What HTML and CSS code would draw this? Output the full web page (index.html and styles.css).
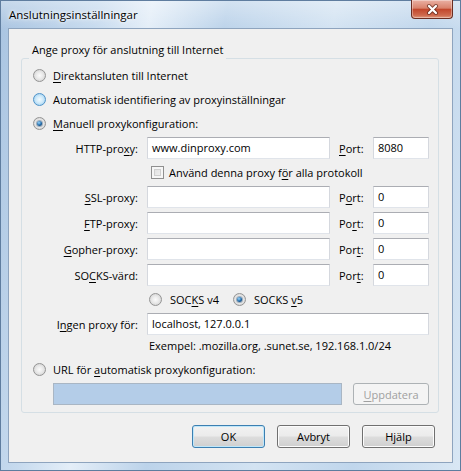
FILE: index.html
```html
<!DOCTYPE html>
<html lang="sv">
<head>
    <meta charset="UTF-8">
    <title>Anslutningsinställningar</title>
    <link rel="stylesheet" href="styles.css">
</head>
<body>
<div class="window">
    <div class="titlebar">
        <span class="title">Anslutningsinställningar</span>
        <div class="close-btn">
            <svg width="13" height="11" viewBox="0 0 13 11">
                <path d="M3 2 L10 9 M10 2 L3 9" stroke="#4a1a10" stroke-width="4" stroke-linecap="round" opacity="0.6"/>
                <path d="M3 2 L10 9 M10 2 L3 9" stroke="#fff" stroke-width="2.2" stroke-linecap="round"/>
            </svg>
        </div>
    </div>

    <div class="client">
        <div class="group">
            <span class="legend">Ange proxy för anslutning till Internet</span>

            <div class="option"><span class="radio"></span><span><u>D</u>irektansluten till Internet</span></div>
            <div class="option"><span class="radio hot"></span><span>Automatisk identifiering av proxyinställningar</span></div>
            <div class="option"><span class="radio checked"></span><span><u>M</u>anuell proxykonfiguration:</span></div>

            <div class="proxy-grid">
                <span class="field-label">HTTP-pro<u>x</u>y:</span>
                <div class="textbox">www.dinproxy.com</div>
                <span class="port-label"><u>P</u>ort:</span>
                <div class="textbox">8080</div>

                <div class="check-row"><span class="checkbox"></span><span>Använd denna proxy f<u>ö</u>r alla protokoll</span></div>

                <span class="field-label"><u>S</u>SL-proxy:</span>
                <div class="textbox"></div>
                <span class="port-label">P<u>o</u>rt:</span>
                <div class="textbox">0</div>

                <span class="field-label"><u>F</u>TP-proxy:</span>
                <div class="textbox"></div>
                <span class="port-label">Po<u>r</u>t:</span>
                <div class="textbox">0</div>

                <span class="field-label"><u>G</u>opher-proxy:</span>
                <div class="textbox"></div>
                <span class="port-label">Por<u>t</u>:</span>
                <div class="textbox">0</div>

                <span class="field-label">SO<u>C</u>KS-värd:</span>
                <div class="textbox"></div>
                <span class="port-label">Por<u>t</u>:</span>
                <div class="textbox">0</div>

                <div class="socks-row">
                    <div class="socks-opt"><span class="radio"></span><span>SOC<u>K</u>S v4</span></div>
                    <div class="socks-opt"><span class="radio checked"></span><span>SOCKS <u>v</u>5</span></div>
                </div>

                <span class="field-label">I<u>n</u>gen proxy för:</span>
                <div class="textbox wide">localhost, 127.0.0.1</div>

                <div class="hint">Exempel: .mozilla.org, .sunet.se, 192.168.1.0/24</div>
            </div>

            <div class="option url-option"><span class="radio"></span><span>URL för <u>a</u>utomatisk proxykonfiguration:</span></div>
            <div class="url-row">
                <div class="textbox url-box"></div>
                <div class="button disabled"><u>U</u>ppdatera</div>
            </div>
        </div>

        <div class="buttons">
            <div class="button default">OK</div>
            <div class="button">Avbryt</div>
            <div class="button">Hjälp</div>
        </div>
    </div>
</div>
</body>
</html>
```

FILE: styles.css
```css
* {
    box-sizing: border-box;
}

body {
    margin: 0;
    font-family: "Open Sans", "Liberation Sans", sans-serif;
    font-size: 11px;
    color: #000;
}

u {
    text-decoration-thickness: 1px;
    text-underline-offset: 2px;
}

/* Glass frame */
.window {
    position: relative;
    width: 461px;
    height: 471px;
    border: 1px solid #5f7d9f;
    background:
        linear-gradient(180deg, rgba(255,255,255,0.35) 0, rgba(255,255,255,0) 28px),
        linear-gradient(100deg, #a9c4e1 0%, #c6daee 18%, #e4eef8 28%, #bcd3ea 42%, #d3e3f2 62%, #c0d6ec 80%, #d9e7f4 100%);
    display: flex;
    flex-direction: column;
}

.titlebar {
    height: 27px;
    display: flex;
    align-items: center;
    padding-left: 8px;
}

.title {
    font-size: 11.5px;
    text-shadow: 0 0 6px #fff, 0 0 3px #fff;
}

.close-btn {
    position: absolute;
    top: -1px;
    right: 7px;
    width: 42px;
    height: 19px;
    border: 1px solid #6b2d22;
    border-top: none;
    border-radius: 0 0 4px 4px;
    background: linear-gradient(180deg, #eab1a4 0%, #d9826c 45%, #c2472c 52%, #cf6a4e 85%, #e09a7f 100%);
    box-shadow: inset 0 0 0 1px rgba(255,255,255,0.35);
    display: flex;
    align-items: center;
    justify-content: center;
}

/* Client area */
.client {
    margin: 0 7px;
    height: 435px;
    border: 1px solid #8ea4be;
    background: #f0f0f0;
    padding: 29px 13px 0 12px;
    display: flex;
    flex-direction: column;
}

.group {
    position: relative;
    border: 1px solid #d5dfe5;
    border-radius: 3px;
    padding: 4px 8px 7px 11px;
}

.legend {
    position: absolute;
    top: -18px;
    left: 7px;
    padding: 0 3px;
    line-height: 18px;
    background: #f0f0f0;
}

.option {
    display: flex;
    align-items: center;
    gap: 7px;
    height: 24px;
}

/* Radio buttons and check boxes */
.radio {
    flex: none;
    width: 13px;
    height: 13px;
    border-radius: 50%;
    border: 1px solid #949494;
    background: radial-gradient(circle at 50% 50%, #fbfbfb 0, #e9e9e9 45%, #c9c9c9 100%);
    display: flex;
    align-items: center;
    justify-content: center;
}

.radio.hot {
    border-color: #4f93c9;
    background: radial-gradient(circle at 50% 50%, #f2fafe 0, #cfeafa 45%, #8cc5ea 100%);
}

.radio.checked::after {
    content: "";
    width: 5px;
    height: 5px;
    border-radius: 50%;
    background: radial-gradient(circle at 40% 35%, #9ad8ff 0, #1f67a5 55%, #0b2e55 100%);
    box-shadow: 0 0 0 1px rgba(20, 60, 100, 0.35);
}

.checkbox {
    flex: none;
    width: 13px;
    height: 13px;
    border: 1px solid #8f8f8f;
    background: linear-gradient(135deg, #dcdcdc 0%, #f4f4f4 100%);
    box-shadow: inset 0 0 0 2px #f6f6f6, inset 0 0 0 3px #cfcfcf;
}

/* Proxy fields */
.proxy-grid {
    margin: 2px 0 0 20px;
    display: grid;
    grid-template-columns: 85px 183px 25px 56px;
    column-gap: 9px;
    row-gap: 4px;
    align-items: center;
}

.field-label {
    text-align: right;
    white-space: nowrap;
}

.port-label {
    white-space: nowrap;
}

.textbox {
    height: 22px;
    border: 1px solid;
    border-color: #abadb3 #d5d8de #e0e4ea #d5d8de;
    background: #fff;
    padding: 0 4px;
    line-height: 20px;
    white-space: nowrap;
}

.textbox.wide {
    grid-column: 2 / span 3;
}

.check-row {
    grid-column: 2 / span 3;
    height: 19px;
    display: flex;
    align-items: center;
    gap: 5px;
    padding-left: 4px;
}

.socks-row {
    grid-column: 2 / span 3;
    height: 19px;
    display: flex;
    align-items: center;
    padding-left: 2px;
}

.socks-opt {
    width: 84px;
    display: flex;
    align-items: center;
    gap: 8px;
}

.hint {
    grid-column: 2 / span 3;
    padding-left: 2px;
    line-height: 14px;
}

.url-option {
    margin-top: 4px;
}

.url-row {
    margin: 2px 0 0 20px;
    display: flex;
    gap: 11px;
}

.url-box {
    width: 289px;
    background: #b4cde8;
    border-color: #a9b6c4;
}

/* Push buttons */
.button {
    width: 73px;
    height: 23px;
    border: 1px solid #707070;
    border-radius: 3px;
    background: linear-gradient(180deg, #f2f2f2 0%, #ebebeb 48%, #dddddd 52%, #cfcfcf 100%);
    box-shadow: inset 0 0 0 1px #fcfcfc;
    display: flex;
    align-items: center;
    justify-content: center;
}

.button.default {
    border-color: #3c7fb1;
    box-shadow: inset 0 0 0 1px #bfe7fa;
}

.button.disabled {
    width: 76px;
    height: 22px;
    border-color: #adb2b5;
    background: #f4f4f4;
    box-shadow: none;
    color: #a0a0a0;
}

.buttons {
    margin: 12px 4px 0 0;
    display: flex;
    justify-content: flex-end;
    gap: 12px;
}
```
